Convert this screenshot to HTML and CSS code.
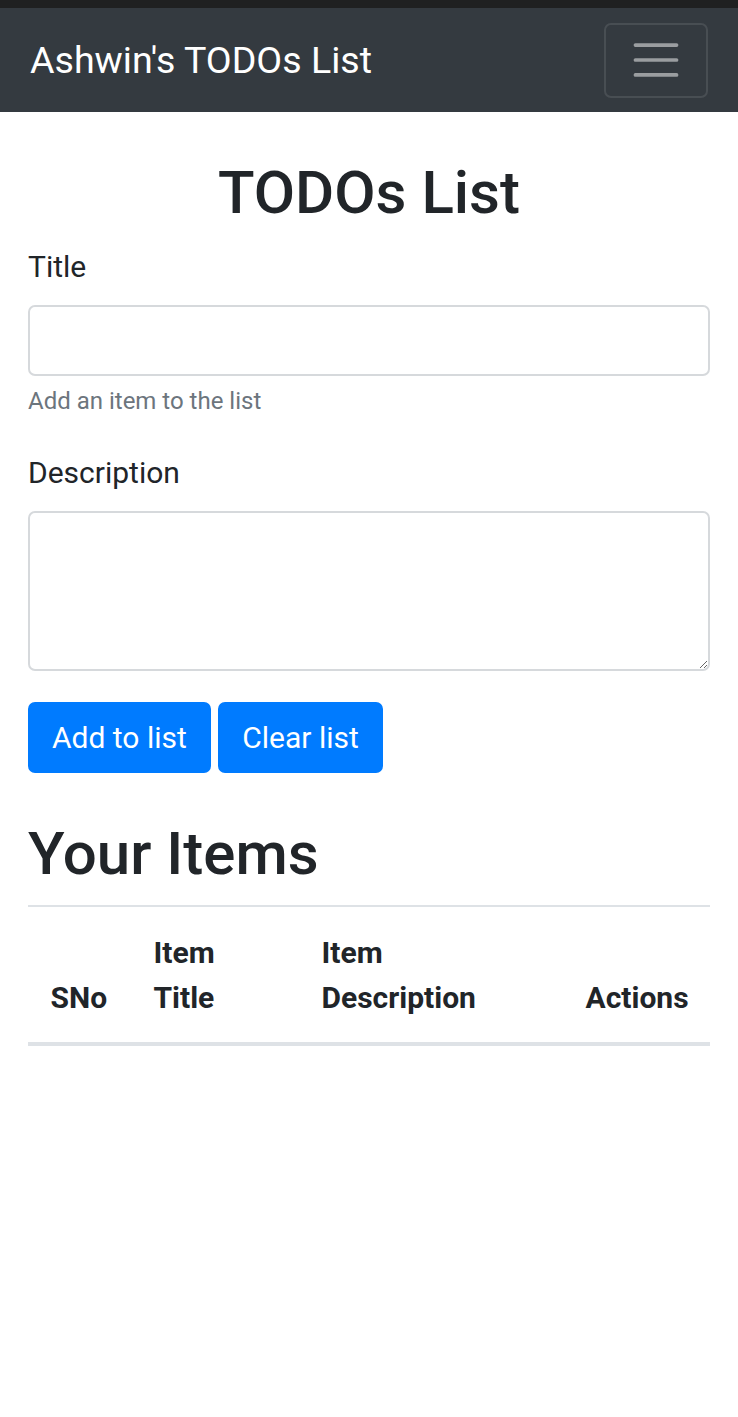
FILE: index.html
```html
<!DOCTYPE html>
<html lang="en">
<head>
<meta charset="utf-8">
<title>Ashwin's TODOs List</title>
<link rel="stylesheet" href="styles.css">
</head>
<body>
<div class="statusbar"></div>
<nav class="navbar">
  <a class="brand" href="#">Ashwin's TODOs List</a>
  <button class="toggler" type="button" aria-label="Toggle navigation">
    <svg class="toggler-icon" viewBox="0 0 30 30" width="56" height="56">
      <path d="M4 7h22M4 15h22M4 23h22" stroke="rgba(255,255,255,0.5)" stroke-width="2" stroke-linecap="round" fill="none"/>
    </svg>
  </button>
</nav>

<div class="container section">
  <h2 class="heading center">TODOs List</h2>
  <form>
    <div class="form-group">
      <label for="title">Title</label>
      <input type="text" class="form-control" id="title">
      <small class="form-text">Add an item to the list</small>
    </div>
    <div class="form-group">
      <label for="description">Description</label>
      <textarea class="form-control textarea" id="description" rows="3"></textarea>
    </div>
    <button type="button" class="btn">Add to list</button>
    <button type="button" class="btn">Clear list</button>
  </form>
</div>

<div class="container section">
  <h2 class="heading">Your Items</h2>
  <table class="table">
    <colgroup>
      <col class="c1"><col class="c2"><col class="c3"><col class="c4">
    </colgroup>
    <thead>
      <tr>
        <th>SNo</th>
        <th>Item Title</th>
        <th>Item Description</th>
        <th>Actions</th>
      </tr>
    </thead>
    <tbody id="tableBody"></tbody>
  </table>
</div>
</body>
</html>
```

FILE: styles.css
```css
* { box-sizing: border-box; }

html, body {
  margin: 0;
  padding: 0;
  background: #fff;
}

body {
  font-family: Roboto, "Liberation Sans", Arial, sans-serif;
  font-size: 30px;
  line-height: 1.5;
  color: #212529;
}

.statusbar {
  height: 8px;
  background: #1f2021;
}

.navbar {
  height: 104px;
  background: #343a40;
  padding: 15px 30px;
  display: flex;
  align-items: center;
  justify-content: space-between;
}

.brand {
  color: #fff;
  text-decoration: none;
  font-size: 37.6px;
  line-height: 56px;
  padding: 9px 0;
  white-space: nowrap;
}

.toggler {
  width: 104px;
  height: 75px;
  padding: 7px 22px;
  background: transparent;
  border: 2px solid rgba(255, 255, 255, 0.1);
  border-radius: 7px;
  display: flex;
  align-items: center;
  justify-content: center;
}

.toggler-icon {
  display: block;
  width: 56px;
  height: 56px;
}

.container {
  padding: 0 28px;
}

.section {
  margin: 45px 0;
}

.heading {
  margin: 0 0 15px;
  font-size: 60px;
  font-weight: 500;
  line-height: 1.2;
}

.center { text-align: center; }

form { margin: 0; }

.form-group {
  margin-bottom: 31px;
}

label {
  display: inline-block;
  margin-bottom: 16px;
}

.form-control {
  display: block;
  width: 100%;
  height: 71px;
  padding: 11px 22px;
  font-family: inherit;
  font-size: 30px;
  line-height: 1.5;
  color: #495057;
  background: #fff;
  border: 2px solid #d6d9dc;
  border-radius: 7px;
  margin: 0;
}

.textarea {
  height: 160px;
  resize: vertical;
}

.form-text {
  display: block;
  margin-top: 7px;
  font-size: 24px;
  color: #6c757d;
}

.btn {
  display: inline-block;
  font-family: inherit;
  font-size: 30px;
  line-height: 45px;
  padding: 11px 22px;
  color: #fff;
  background: #007bff;
  border: 2px solid #007bff;
  border-radius: 7px;
  margin: 0;
  vertical-align: middle;
}

.table {
  width: 100%;
  border-collapse: collapse;
  table-layout: fixed;
  color: #212529;
}

.c1 { width: 103px; }
.c2 { width: 168px; }
.c3 { width: 264px; }
.c4 { width: 147px; }

.table th {
  padding: 22.5px;
  vertical-align: bottom;
  text-align: left;
  font-weight: 700;
  border-top: 2px solid #dee2e6;
  border-bottom: 4px solid #dee2e6;
}
```
